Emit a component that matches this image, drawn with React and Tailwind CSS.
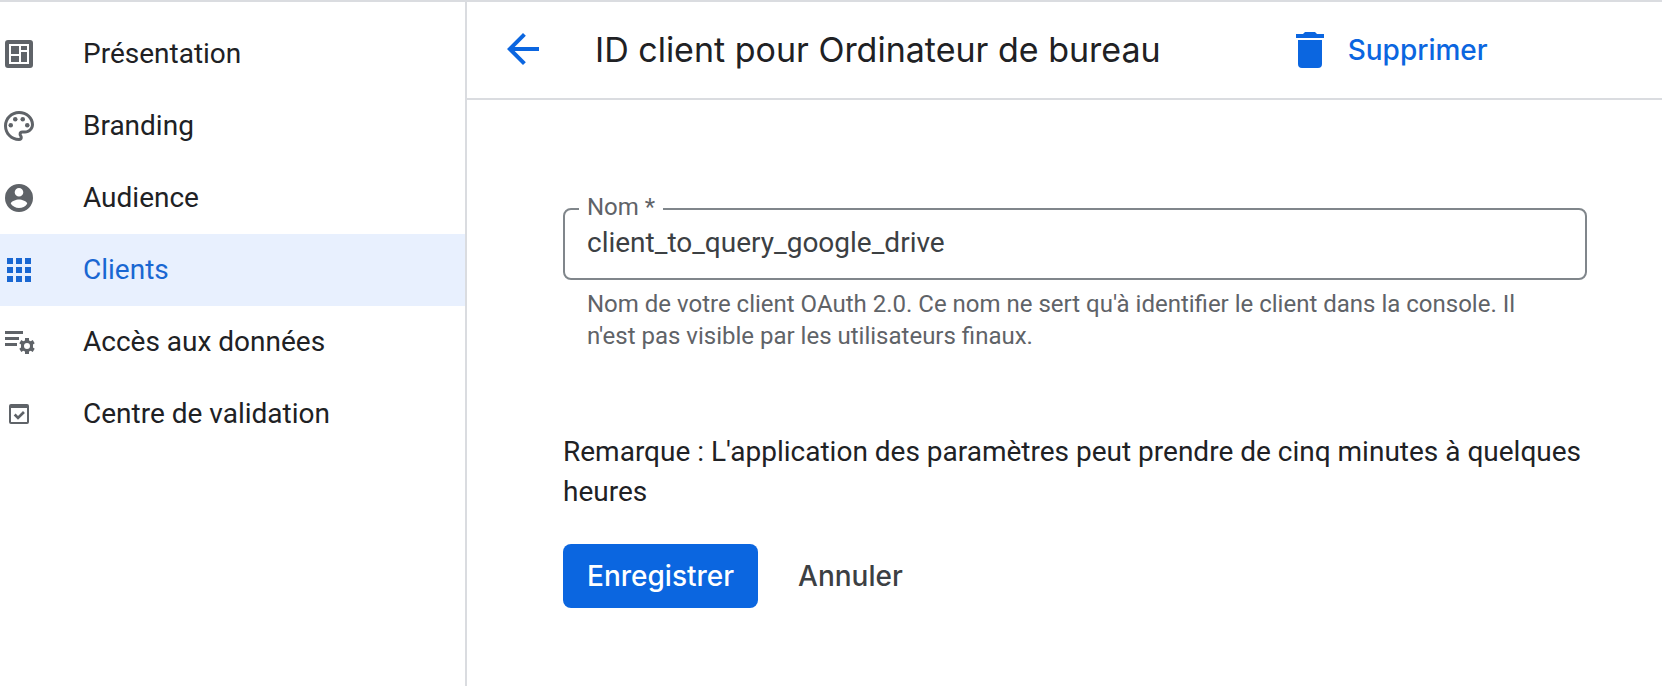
import React from "react";

const icon = "block h-9 w-9 shrink-0 fill-current";

function DashboardIcon() {
  return (
    <svg viewBox="0 0 36 36" className={icon} aria-hidden="true">
      <path
        fillRule="evenodd"
        d="M7 4h22a3 3 0 0 1 3 3v22a3 3 0 0 1-3 3H7a3 3 0 0 1-3-3V7a3 3 0 0 1 3-3zM8 8v20h20V8z"
      />
      <path d="M10 10h8v8h-8zM20 10h6v4h-6zM10 20h8v6h-8zM20 16h6v10h-6z" />
    </svg>
  );
}

function PaletteIcon() {
  return (
    <svg viewBox="0 0 24 24" className={icon} aria-hidden="true">
      <path d="M12 22C6.49 22 2 17.51 2 12S6.49 2 12 2s10 4.04 10 9c0 3.31-2.69 6-6 6h-1.77c-.28 0-.5.22-.5.5 0 .12.05.23.13.33.41.47.64 1.06.64 1.67A2.5 2.5 0 0 1 12 22zm0-18c-4.41 0-8 3.59-8 8s3.59 8 8 8c.28 0 .5-.22.5-.5a.54.54 0 0 0-.14-.35c-.41-.46-.63-1.05-.63-1.65a2.5 2.5 0 0 1 2.5-2.5H16c2.21 0 4-1.79 4-4 0-3.86-3.59-7-8-7z" />
      <circle cx="6.5" cy="11.5" r="1.5" />
      <circle cx="9.5" cy="7.5" r="1.5" />
      <circle cx="14.5" cy="7.5" r="1.5" />
      <circle cx="17.5" cy="11.5" r="1.5" />
    </svg>
  );
}

function AccountIcon() {
  return (
    <svg viewBox="0 0 36 36" className={icon} aria-hidden="true">
      <path
        fillRule="evenodd"
        d="M18 4a14 14 0 1 0 0 28 14 14 0 0 0 0-28zm0 4a4.300 4.300 0 1 1 0 8.600A4.300 4.300 0 0 1 18 8zm0 20c-3.400 0-6.400-1.700-8.200-4.300.1-2.700 5.500-4.300 8.200-4.300s8.100 1.600 8.200 4.300A10 10 0 0 1 18 28z"
      />
    </svg>
  );
}

function AppsIcon() {
  return (
    <svg viewBox="0 0 36 36" className={icon} aria-hidden="true">
      <path d="M6 6h6v6H6zM15 6h6v6h-6zM24 6h6v6h-6zM6 15h6v6H6zM15 15h6v6h-6zM24 15h6v6h-6zM6 24h6v6H6zM15 24h6v6h-6zM24 24h6v6h-6z" />
    </svg>
  );
}

function DataAccessIcon() {
  return (
    <svg viewBox="0 0 36 36" className={icon} aria-hidden="true">
      <path d="M4 7h18v3H4zM4 13h14v3H4zM4 19h12v3H4z" />
      <path
        fillRule="evenodd"
        d="M24 14h4v2.500l1.800.8 1.900-1.400 2 3.300-1.700 1.300v3l1.700 1.300-2 3.300-1.900-1.400-1.800.8V30h-4v-2.500l-1.800-.8-1.900 1.400-2-3.300 1.700-1.300v-3l-1.700-1.300 2-3.300 1.900 1.400 1.800-.8zM26 19a3 3 0 1 0 0 6 3 3 0 0 0 0-6z"
      />
    </svg>
  );
}

function ValidationIcon() {
  return (
    <svg viewBox="0 0 36 36" className={icon} aria-hidden="true">
      <path
        fillRule="evenodd"
        d="M10 8h16a2 2 0 0 1 2 2v16a2 2 0 0 1-2 2H10a2 2 0 0 1-2-2V10a2 2 0 0 1 2-2zM10 12v14h16V12z"
      />
      <path d="M14.600 17.600 17 20l5-5 1.900 1.900-6.900 6.900-4.300-4.300z" />
    </svg>
  );
}

const items = [
  { label: "Présentation", Icon: DashboardIcon },
  { label: "Branding", Icon: PaletteIcon },
  { label: "Audience", Icon: AccountIcon },
  { label: "Clients", Icon: AppsIcon, active: true },
  { label: "Accès aux données", Icon: DataAccessIcon },
  { label: "Centre de validation", Icon: ValidationIcon },
];

function Sidebar() {
  return (
    <nav className="w-[467px] shrink-0 border-r-2 border-[#dadce0] pt-4">
      <ul>
        {items.map(({ label, Icon, active }) => (
          <li key={label}>
            <a
              href="#"
              aria-current={active ? "page" : undefined}
              className={
                active
                  ? "flex h-[72px] items-center gap-[46px] bg-[#e8f0fe] pl-px text-[#1967d2]"
                  : "flex h-[72px] items-center gap-[46px] pl-px text-[#5f6368]"
              }
            >
              <Icon />
              <span className={active ? "" : "text-[#202124]"}>{label}</span>
            </a>
          </li>
        ))}
      </ul>
    </nav>
  );
}

function Header() {
  return (
    <header className="flex h-[98px] items-center border-b-2 border-[#dadce0] pl-9 font-['Inter',sans-serif]">
      <button type="button" aria-label="Retour" className="text-[#0b66e0]">
        <svg viewBox="2 2.500 20 20" className="block h-10 w-10 fill-current" aria-hidden="true">
          <path d="M20 11H7.830l5.590-5.590L12 4l-8 8 8 8 1.410-1.410L7.830 13H20z" />
        </svg>
      </button>
      <h1 className="ml-[52px] text-[34px] leading-[48px] text-[#202124]">
        ID client pour Ordinateur de bureau
      </h1>
      <button
        type="button"
        className="ml-[131px] flex items-center gap-5 text-[28px] font-medium text-[#0b66e0]"
      >
        <svg viewBox="0 0 36 36" className={icon} aria-hidden="true">
          <path d="M4 2h7l2-2h10l2 2h7v4H4zM6 8h24v24a4 4 0 0 1-4 4H10a4 4 0 0 1-4-4z" />
        </svg>
        Supprimer
      </button>
    </header>
  );
}

function ClientForm() {
  return (
    <form className="pt-[95px] pr-[75px] pb-14 pl-24" onSubmit={(e) => e.preventDefault()}>
      <fieldset className="h-[85px] rounded-lg border-2 border-[#80868b] px-[14px]">
        <legend className="px-2 pb-1 text-2xl leading-6 text-[#5f6368]">
          <label htmlFor="client-name">Nom *</label>
        </legend>
        <input
          id="client-name"
          type="text"
          required
          defaultValue="client_to_query_google_drive"
          aria-describedby="client-name-help"
          className="block h-10 w-full px-2 text-[#3c4043] outline-none"
        />
      </fieldset>
      <p id="client-name-help" className="mt-2 px-6 text-2xl leading-8 text-[#5f6368]">
        Nom de votre client OAuth 2.0. Ce nom ne sert qu'à identifier le client dans la console. Il
        n'est pas visible par les utilisateurs finaux.
      </p>
      <p className="mt-20 leading-10">
        Remarque : L'application des paramètres peut prendre de cinq minutes à quelques heures
      </p>
      <div className="mt-8 flex gap-4 font-['Inter',sans-serif] text-[28px] font-medium">
        <button type="submit" className="h-16 rounded-lg bg-[#0b66e0] px-6 text-white">
          Enregistrer
        </button>
        <button type="button" className="h-16 px-6 text-[#3c4043]">
          Annuler
        </button>
      </div>
    </form>
  );
}

export default function App() {
  return (
    <div className="flex min-h-screen border-t-2 border-[#dadce0] bg-white font-['Roboto',sans-serif] text-[28px] text-[#202124]">
      <Sidebar />
      <main className="min-w-0 flex-1">
        <Header />
        <ClientForm />
      </main>
    </div>
  );
}
